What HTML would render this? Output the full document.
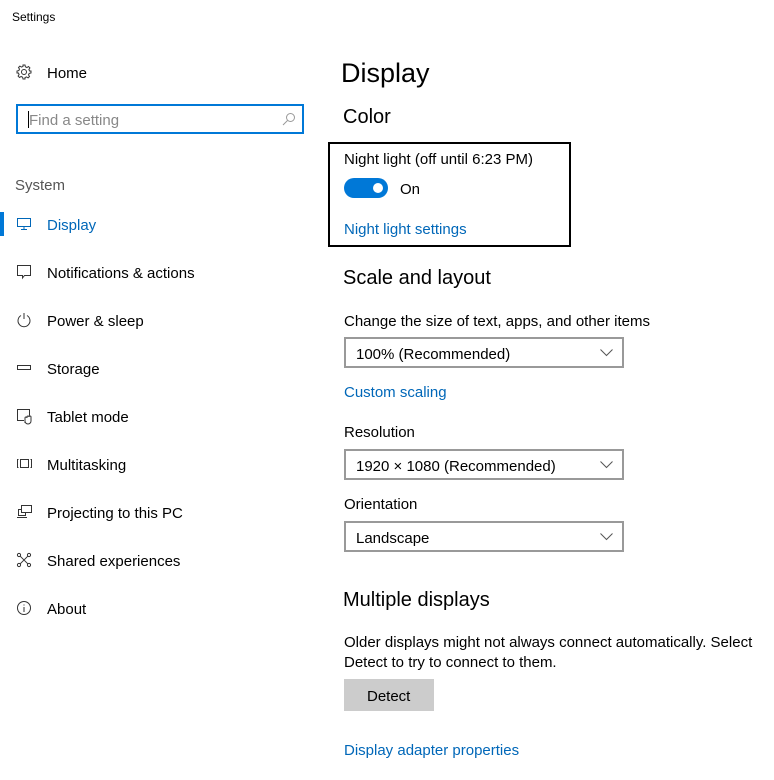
<!DOCTYPE html>
<html><head><style>
body{margin:0;width:774px;height:780px;background:#fff;font-family:"Liberation Sans",sans-serif;color:#000;position:relative;overflow:hidden}
.a{position:absolute;white-space:nowrap;line-height:1;margin-top:1px}
.t{font-size:15px}
.blue{color:#0067b8}
.ic{position:absolute;left:16px}
.dd{position:absolute;left:344px;width:276px;height:27px;border:2px solid #999;box-sizing:content-box}
.dd span{position:absolute;left:10px;top:7px;font-size:15px}
.dd svg{position:absolute;right:9px;top:10px}
</style></head><body>
<div class="a" style="left:12px;top:10px;font-size:12px">Settings</div>

<svg class="ic" style="top:64px" width="16" height="16" viewBox="0 0 16 16" fill="none" stroke="#333" stroke-width="1"><circle cx="8" cy="8" r="2.5"/><path d="M7 1h2l.4 1.8 1.5.7 1.6-1 1.4 1.4-1 1.6.7 1.5L15 7v2l-1.8.4-.7 1.5 1 1.6-1.4 1.4-1.6-1-1.5.7L9 15H7l-.4-1.8-1.5-.7-1.6 1-1.4-1.4 1-1.6-.7-1.5L1 9V7l1.8-.4.7-1.5-1-1.6 1.4-1.4 1.6 1 1.5-.7z"/></svg>
<div class="a t" style="left:47px;top:65px">Home</div>

<div style="position:absolute;left:16px;top:104px;width:284px;height:26px;border:2px solid #0078d7"></div>
<div style="position:absolute;left:28px;top:111px;width:1px;height:17px;background:#000"></div>
<div class="a t" style="left:29px;top:112px;color:#888">Find a setting</div>
<svg style="position:absolute;left:282px;top:112px" width="14" height="14" viewBox="0 0 14 14" fill="none" stroke="#999"><circle cx="8.5" cy="5.5" r="4"/><path d="M5.5 8.5L1 13"/></svg>

<div class="a t" style="left:15px;top:177px;color:#555">System</div>
<div style="position:absolute;left:0;top:212px;width:4px;height:24px;background:#0078d7"></div>
<svg class="ic" style="top:217px" width="16" height="14" viewBox="0 0 16 14" fill="none" stroke="#0067b8"><rect x="1.5" y="1.5" width="13" height="8"/><path d="M5 12.5h6M8 10v2"/></svg>
<div class="a t blue" style="left:47px;top:217px">Display</div>

<svg class="ic" style="top:264px" width="16" height="16" viewBox="0 0 16 16" fill="none" stroke="#333"><path d="M1.5 1.5h13v10h-6l-2 2.5v-2.5h-5z"/></svg>
<div class="a t" style="left:47px;top:265px">Notifications &amp; actions</div>
<svg class="ic" style="top:312px" width="16" height="16" viewBox="0 0 16 16" fill="none" stroke="#333"><path d="M5 3.5a6 6 0 1 0 6 0M8 1v6"/></svg>
<div class="a t" style="left:47px;top:313px">Power &amp; sleep</div>
<svg class="ic" style="top:363px" width="16" height="10" viewBox="0 0 16 10" fill="none" stroke="#333"><rect x="1.5" y="2.5" width="13" height="4"/></svg>
<div class="a t" style="left:47px;top:361px">Storage</div>
<svg class="ic" style="top:408px" width="18" height="18" viewBox="0 0 18 18" fill="none" stroke="#333"><path d="M8 12.5H1.5v-11h12v6"/><path d="M9 15v-5a1 1 0 0 1 2 0v-1a1 1 0 0 1 2 0a1 1 0 0 1 2 0v4a3 3 0 0 1-6 0z"/></svg>
<div class="a t" style="left:47px;top:409px">Tablet mode</div>
<svg class="ic" style="top:457px" width="18" height="14" viewBox="0 0 18 14" fill="none" stroke="#333"><rect x="4.5" y="2.5" width="8" height="8"/><path d="M2.5 2.5h-1v8h1M14.5 2.5h1v8h-1"/></svg>
<div class="a t" style="left:47px;top:457px">Multitasking</div>
<svg class="ic" style="top:504px" width="18" height="16" viewBox="0 0 18 16" fill="none" stroke="#333"><rect x="5.5" y="1.5" width="10" height="7"/><path d="M5.5 5.5h-3v6h7v-3M1 13.5h10"/></svg>
<div class="a t" style="left:47px;top:505px">Projecting to this PC</div>
<svg class="ic" style="top:552px" width="16" height="16" viewBox="0 0 16 16" fill="none" stroke="#333"><circle cx="3" cy="3" r="1.6"/><circle cx="13" cy="3" r="1.6"/><circle cx="3" cy="13" r="1.6"/><circle cx="13" cy="13" r="1.6"/><path d="M4.2 4.2l7.6 7.6M11.8 4.2l-7.6 7.6"/></svg>
<div class="a t" style="left:47px;top:553px">Shared experiences</div>
<svg class="ic" style="top:600px" width="16" height="16" viewBox="0 0 16 16" fill="none" stroke="#333"><circle cx="8" cy="8" r="6.5"/><path d="M8 7v5M8 4.5v1"/></svg>
<div class="a t" style="left:47px;top:601px">About</div>

<div class="a" style="left:341px;top:59px;font-size:27px">Display</div>
<div class="a" style="left:343px;top:106px;font-size:20px">Color</div>
<div style="position:absolute;left:328px;top:142px;width:239px;height:101px;border:2px solid #000"></div>
<div class="a t" style="left:344px;top:151px">Night light (off until 6:23 PM)</div>
<div style="position:absolute;left:344px;top:178px;width:44px;height:20px;border-radius:10px;background:#0078d7"></div>
<div style="position:absolute;left:373px;top:183px;width:10px;height:10px;border-radius:5px;background:#fff"></div>
<div class="a t" style="left:400px;top:181px">On</div>
<div class="a t blue" style="left:344px;top:221px">Night light settings</div>

<div class="a" style="left:343px;top:267px;font-size:20px">Scale and layout</div>
<div class="a t" style="left:344px;top:313px">Change the size of text, apps, and other items</div>
<div class="dd" style="top:337px"><span>100% (Recommended)</span><svg width="13" height="8" viewBox="0 0 13 8" fill="none" stroke="#555"><path d="M.5.5l6 6 6-6"/></svg></div>
<div class="a t blue" style="left:344px;top:384px">Custom scaling</div>
<div class="a t" style="left:344px;top:424px">Resolution</div>
<div class="dd" style="top:449px"><span>1920 × 1080 (Recommended)</span><svg width="13" height="8" viewBox="0 0 13 8" fill="none" stroke="#555"><path d="M.5.5l6 6 6-6"/></svg></div>
<div class="a t" style="left:344px;top:496px">Orientation</div>
<div class="dd" style="top:521px"><span>Landscape</span><svg width="13" height="8" viewBox="0 0 13 8" fill="none" stroke="#555"><path d="M.5.5l6 6 6-6"/></svg></div>

<div class="a" style="left:343px;top:589px;font-size:20px">Multiple displays</div>
<div class="a t" style="left:344px;top:634px">Older displays might not always connect automatically. Select</div>
<div class="a t" style="left:344px;top:654px">Detect to try to connect to them.</div>
<div style="position:absolute;left:344px;top:679px;width:90px;height:32px;background:#ccc"></div>
<div class="a t" style="left:367px;top:688px">Detect</div>
<div class="a t blue" style="left:344px;top:742px">Display adapter properties</div>
</body></html>
